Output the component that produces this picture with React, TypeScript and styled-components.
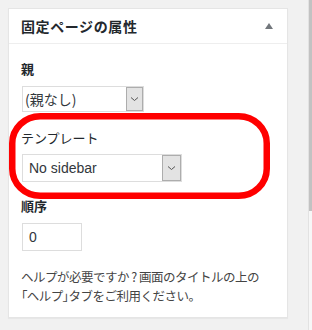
import styled, { createGlobalStyle } from 'styled-components';

const GlobalStyle = createGlobalStyle`
  html, body {
    margin: 0;
    padding: 0;
    background: #f1f1f1;
  }
`;

const Page = styled.div`
  position: relative;
  display: flex;
  width: 312px;
  height: 330px;
  overflow: hidden;
  background: #f1f1f1;
  font-family: "Noto Sans CJK JP", "Liberation Sans", sans-serif;
`;

const Panel = styled.section`
  width: 278px;
  height: 308px;
  margin: 8px 0 0 8px;
  background: #fff;
  border: 1px solid #e5e5e5;
  box-shadow: 0 1px 1px rgba(0, 0, 0, 0.04);
  display: flex;
  flex-direction: column;
`;

const Header = styled.div`
  height: 34px;
  border-bottom: 1px solid #eee;
  display: flex;
  align-items: center;
  justify-content: space-between;
  padding: 0 14px 0 12px;
`;

const Title = styled.h2`
  margin: 0;
  font-size: 14px;
  font-weight: 700;
  color: #23282d;
  letter-spacing: 0.6px;
`;

const Body = styled.div`
  padding: 0 12px 12px 12px;
  display: flex;
  flex-direction: column;
  align-items: flex-start;
`;

const Label = styled.p<{ $top: number; $bold?: boolean }>`
  margin: ${(p) => p.$top}px 0 0 0;
  font-size: 13px;
  line-height: 18px;
  font-weight: ${(p) => (p.$bold ? 700 : 400)};
  color: #23282d;
`;

const Select = styled.div<{ $width: number; $height: number; $top: number }>`
  margin: ${(p) => p.$top}px 0 0 1px;
  width: ${(p) => p.$width}px;
  height: ${(p) => p.$height}px;
  box-sizing: border-box;
  border: 1px solid #ddd;
  background: #fff;
  display: flex;
  align-items: stretch;
`;

const SelectValue = styled.span<{ $latin?: boolean }>`
  flex: 1;
  display: flex;
  align-items: center;
  padding-left: ${(p) => (p.$latin ? 6 : 2)}px;
  font-family: ${(p) =>
    p.$latin ? '"Liberation Sans", sans-serif' : '"Noto Sans CJK JP", sans-serif'};
  font-size: 14px;
  color: #32373c;
`;

const ArrowBox = styled.span<{ $width: number }>`
  width: ${(p) => p.$width}px;
  box-sizing: border-box;
  border: 1px solid #adadad;
  background: #e3e3e3;
  display: flex;
  align-items: center;
  justify-content: center;
`;

const NumberInput = styled.div`
  margin: 8px 0 0 1px;
  width: 60px;
  height: 28px;
  box-sizing: border-box;
  border: 1px solid #ddd;
  background: #fff;
  display: flex;
  align-items: center;
  padding-left: 6px;
  font-family: "Liberation Sans", sans-serif;
  font-size: 14px;
  color: #32373c;
`;

const Help = styled.p`
  margin: 16px 0 0 0;
  font-size: 12.5px;
  line-height: 19px;
  color: #444;
  letter-spacing: -0.5px;
  white-space: nowrap;
`;

const Bracket = styled.span`
  font-feature-settings: "palt";
`;

const ScrollTrack = styled.div`
  margin-left: auto;
  width: 3px;
  height: 100%;
  background: #f7f7f7;
  border-left: 1px solid #e2e2e2;
`;

const ScrollThumb = styled.div`
  height: 211px;
  background: #c2c2c2;
`;

const Annotation = styled.svg`
  position: absolute;
  left: 9px;
  top: 113px;
  pointer-events: none;
`;

const Chevron = () => (
  <svg width="9" height="6" viewBox="0 0 9 6">
    <path d="M1 1.5 L4.5 4.5 L8 1.5" fill="none" stroke="#555" strokeWidth="1" />
  </svg>
);

export default function App() {
  return (
    <Page>
      <GlobalStyle />
      <Panel>
        <Header>
          <Title>固定ページの属性</Title>
          <svg width="8" height="6" viewBox="0 0 8 6">
            <path d="M4 0 L8 6 L0 6 Z" fill="#72777c" />
          </svg>
        </Header>
        <Body>
          <Label $top={16} $bold>親</Label>
          <Select $width={122} $height={26} $top={8}>
            <SelectValue>(親なし)</SelectValue>
            <ArrowBox $width={17}>
              <Chevron />
            </ArrowBox>
          </Select>
          <Label $top={17}>テンプレート</Label>
          <Select $width={160} $height={28} $top={7}>
            <SelectValue $latin>No sidebar</SelectValue>
            <ArrowBox $width={19}>
              <Chevron />
            </ArrowBox>
          </Select>
          <Label $top={15} $bold>順序</Label>
          <NumberInput>0</NumberInput>
          <Help>
            ヘルプが必要ですか ? 画面のタイトルの上の
            <br />
            <Bracket>「</Bracket>ヘルプ<Bracket>」</Bracket>タブをご利用ください。
          </Help>
        </Body>
      </Panel>
      <ScrollTrack>
        <ScrollThumb />
      </ScrollTrack>
      <Annotation width="262" height="87" viewBox="0 0 262 87">
        <rect
          x="3.25"
          y="3.25"
          width="254.5"
          height="79.5"
          rx="28"
          ry="27"
          fill="none"
          stroke="#ff0000"
          strokeWidth="6.5"
        />
      </Annotation>
    </Page>
  );
}
